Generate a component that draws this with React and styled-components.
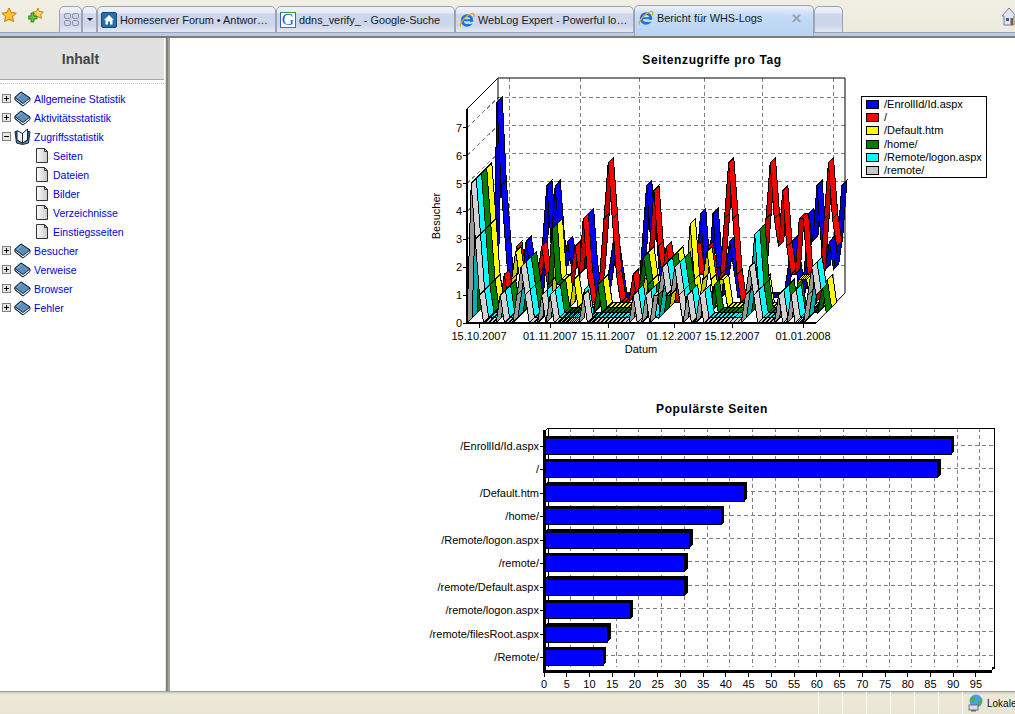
import React from "react";
import styled, { createGlobalStyle } from "styled-components";

const Global = createGlobalStyle`
  html, body { margin: 0; padding: 0; background: #fff; }
  body { font-family: "Liberation Sans", Arial, sans-serif; }
`;

const Page = styled.div`
  width: 1015px; height: 714px; display: flex; flex-direction: column; overflow: hidden; background: #fff;
`;
const TabBar = styled.div`
  height: 38px; flex: none; box-sizing: border-box; display: flex; align-items: flex-start;
  background: linear-gradient(#f1efe4 0, #eceadc 32px);
  border-bottom: 2px solid #7f7d6e; position: relative;
`;
const BlueBand = styled.div`
  position: absolute; left: 0; right: 0; bottom: 0; height: 4px; background: #b7cbec; border-top: 1px solid #9aa0ae; box-sizing: border-box;
`;
const Favs = styled.div`
  width: 59px; height: 32px; flex: none; box-sizing: border-box; display: flex; gap: 11px; padding: 7px 0 0 1px;
`;
const Tabs = styled.div`
  display: flex; align-items: flex-start; height: 36px; position: relative; z-index: 1;
`;
const Tab = styled.div`
  width: ${p => p.$w}px; box-sizing: border-box; height: ${p => (p.$active ? 31 : 27)}px; margin-top: ${p => (p.$active ? 5 : 6)}px;
  flex: none; display: flex; align-items: center; gap: 3px; padding: ${p => (p.$active ? "0 6px 6px 3px" : "0 2px 0 3px")};
  border: 1px solid #9fa3b1; border-bottom: ${p => (p.$active ? "none" : "1px solid #9fa3b1")}; border-radius: 5px 5px 0 0;
  background: ${p => p.$active
    ? "linear-gradient(#eef3fb 0, #c6dcf7 9px, #b9d3f3 100%)"
    : "linear-gradient(#f0f2f9 0, #e6eaf5 6px, #cdd6ea 7px, #cdd6ea 18px, #e2e6f1 24px)"};
  font-size: 10.900px; color: #1a1a1a; white-space: nowrap;
`;
const TabLabel = styled.span`
  flex: 1; min-width: 0; white-space: nowrap;
`;
const TabClose = styled.span`
  color: #97a3b3; font-weight: bold; font-size: 13px; padding-right: 5px;
`;
const Caret = styled.span`
  width: 0; height: 0; margin: 0 auto; border-left: 3px solid transparent; border-right: 3px solid transparent; border-top: 3px solid #222;
`;
const ThumbGrid = styled.div`
  display: grid; grid-template-columns: 7px 7px; grid-auto-rows: 6px; gap: 1px; margin: 0 auto;
`;
const Thumb = styled.i`
  border: 1px solid #8d93a3; border-radius: 2px; box-sizing: border-box;
`;
const FavIconBox = styled.div`
  width: 16px; height: 16px; flex: none; box-sizing: border-box; border: 1px solid;
  border-color: #2aa039 #c03a3a #2a9a40 #2a5fc0; background: #fff; color: #2a5fd0;
  font: 17px/14px "Liberation Serif", serif; text-align: center; overflow: hidden;
`;
const HomeSlot = styled.div`
  position: absolute; right: -2px; top: 7px;
`;
const Icon = styled.svg`
  flex: none; display: block;
`;
const Main = styled.div`
  flex: 1; display: flex; min-height: 0;
`;
const Sidebar = styled.nav`
  width: 165px; flex: none; box-sizing: border-box; background: #fff;
`;
const SideHead = styled.div`
  height: 42px; background: #e1e1e1; border-bottom: 1px solid #a9a9a9; box-sizing: border-box; width: 164px; padding-right: 3px;
  display: flex; align-items: center; justify-content: center;
  font: bold 14px "Liberation Sans", sans-serif; color: #444;
`;
const SideDots = styled.div`
  height: 0; margin-top: 3px; width: 164px; border-top: 1px dotted #bdbdbd;
`;
const Tree = styled.div`
  padding-top: 5px; display: flex; flex-direction: column;
`;
const Row = styled.div`
  height: 19px; display: flex; align-items: center; padding-left: ${p => (p.$child ? 36 : 2)}px; box-sizing: border-box;
`;
const Toggle = styled.span`
  width: 9px; height: 9px; flex: none; box-sizing: border-box; border: 1px solid #808080; background: #e8e8e0; position: relative; margin-right: 3px;
  &::before { content: ""; position: absolute; left: 1px; right: 1px; top: 3px; height: 1px; background: #000; }
  &::after { content: ""; display: ${p => (p.$open ? "none" : "block")}; position: absolute; top: 1px; bottom: 1px; left: 3px; width: 1px; background: #000; }
`;
const RowLink = styled.a`
  font: 10.500px "Liberation Sans", sans-serif; color: #0000e0; margin-left: ${p => (p.$child ? 5 : 3)}px; white-space: nowrap;
`;
const Splitter = styled.div`
  width: 5px; flex: none; box-sizing: border-box; background: #84827a; border-left: 1px solid #e4e2d6; border-right: 2px solid #a6a59c;
`;
const Content = styled.main`
  flex: 1; display: flex; flex-direction: column; overflow: hidden; background: #fff;
`;
const ChartSvg = styled.svg`
  display: block; flex: none; font-family: "Liberation Sans", Arial, sans-serif; font-size: 11px;
`;
const StatusBar = styled.footer`
  height: 23px; flex: none; box-sizing: border-box; background: linear-gradient(#c8c6b8 0, #d8d6c8 1px, #ece9d8 3px, #e8e5d4 100%);
  border-top: 1px solid #a0a094; display: flex; justify-content: flex-end; align-items: center; overflow: hidden;
`;
const StatusCell = styled.div`
  width: 24px; height: 100%; flex: none; box-sizing: border-box; border-left: 1px solid #fff;
`;
const ZoneCell = styled.div`
  width: 53px; flex: none; display: flex; align-items: center; gap: 2px; padding-left: 4px; box-sizing: border-box; height: 100%;
  border-left: 1px solid #fff; font-size: 10px; color: #111; white-space: nowrap;
`;

/* ---------- icons ---------- */
const Star = () => (
  <Icon width="16" height="16" viewBox="0 0 16 16"><path d="M8 1l2.200 4.600 5 .6-3.700 3.400 1 5L8 12.200 3.500 14.600l1-5L.8 6.200l5-.6z" fill="#fdc22c" stroke="#c07a10" /></Icon>
);
const StarPlus = () => (
  <Icon width="16" height="16" viewBox="0 0 16 16"><path d="M10 1l1.600 3.600 3.800.4-2.800 2.600.8 3.800L10 9.600 6.700 11.400l.8-3.800L4.700 5l3.800-.4z" fill="#fdd45a" stroke="#b98a20" /><path d="M3 6h3v3h3v3H6v3H3v-3H0V9h3z" fill="#5cc23c" stroke="#2a7a1a" strokeWidth=".8" /></Icon>
);
const HomeFav = () => (
  <Icon width="16" height="16" viewBox="0 0 16 16"><rect x=".5" y=".5" width="15" height="15" rx="1.500" fill="#2a6ea8" stroke="#144a78" /><path d="M8 3l5 5h-1.500v4.500H9V9.500H7v3H4.500V8H3z" fill="#fff" /></Icon>
);
const IE = () => (
  <Icon width="16" height="16" viewBox="0 0 16 16">
    <circle cx="8" cy="8.500" r="4.800" fill="#bfe0fa" stroke="#1f74d0" strokeWidth="2.800" />
    <path d="M4 8.200h8.500" stroke="#1f74d0" strokeWidth="2" />
    <path d="M10 11.500l4-1" stroke="#dcecfb" strokeWidth="1.400" />
    <path d="M1.500 14.500C0 11 6 4.500 12.500 1.500c2.500-.8 3 1.500 1.500 3.500" fill="none" stroke="#eea520" strokeWidth="1.300" />
  </Icon>
);
const House = () => (
  <Icon width="16" height="20" viewBox="0 0 16 20"><path d="M8 1L1 9h2v9h10V9h2z" fill="#dfe4ee" stroke="#6d7f9c" /><rect x="5" y="11" width="3" height="3" fill="#3a5f96" /><path d="M9.500 11h2.500v7H9.500z" fill="#8a5a2a" /></Icon>
);
const Globe = () => (
  <Icon width="18" height="18" viewBox="0 0 18 18"><circle cx="9" cy="7" r="6.500" fill="#4aa0e8" /><path d="M4 3c3-1 5 1 4 3S4 8 3 6zM11 7l4-1-1 5-3 1z" fill="#4cb04c" /><rect x="2" y="11" width="9" height="5" fill="#d8dde8" stroke="#556" strokeWidth=".8" /><rect x="4" y="16" width="5" height="1.500" fill="#667" /></Icon>
);
const Book = () => (
  <Icon width="17" height="16" viewBox="0 0 17 16">
    <path d="M.8 8.500V6.500L7 1l9 6v2.500L9 15z" fill="#f4f4f4" stroke="#10263c" />
    <path d="M.8 6.500L7 1l9 6-7 5.500z" fill="#5c8fbe" stroke="#10263c" />
    <path d="M3 6.500l4.500-4" stroke="#9cc0e0" />
    <path d="M.8 8.500l8.200 6.500" stroke="#10263c" />
  </Icon>
);
const OpenBook = () => (
  <Icon width="17" height="17" viewBox="0 0 17 17">
    <path d="M1 3.500L2.500 15l6 1.500 6-1.500L16 3.500h-2V12l-5.500 3L3 12V3.500z" fill="#5c8fbe" stroke="#10263c" />
    <path d="M3 2.500l5.500 3V15L3 12zM13.500 1L8.500 5.500V15l5-3z" fill="#f4f4f4" stroke="#10263c" />
  </Icon>
);
const Doc = () => (
  <Icon width="12" height="15" viewBox="0 0 12 15">
    <defs><linearGradient id="dg" x1="0" x2="1"><stop offset="0" stopColor="#fff" /><stop offset="1" stopColor="#c8c8c8" /></linearGradient></defs>
    <path d="M.5.5h8l3 3v11H.500z" fill="url(#dg)" stroke="#333" />
    <path d="M8.500.5v3h3" fill="none" stroke="#333" />
  </Icon>
);

/* ---------- line 3D chart ---------- */
const SER = [
  { name: "/EnrollId/Id.aspx", c: "#0000ff", d: "#0000c4", peaks: [[1,7],[8,2],[13,4],[15,4],[18,2],[21,2],[23,3],[29,2],[37,4],[39,3],[50,3],[53,3],[57,2],[64,1],[72,2],[76,3],[78,4],[81,2],[84,4]] },
  { name: "/", c: "#ff0000", d: "#c80000", peaks: [[1,1],[4,1],[7,2],[13,2],[21,2],[23,3],[29,5],[35,1],[40,4],[43,2],[50,2],[53,2],[58,5],[68,5],[71,4],[75,3],[76,3],[82,5],[84,2]] },
  { name: "/Default.htm", c: "#ffff00", d: "#c4c400", peaks: [[1,5],[3,1],[8,2],[18,3],[20,1],[22,1],[29,1],[40,2],[47,2],[50,3],[54,2],[57,1],[58,1],[68,1],[76,1],[77,1],[78,1],[83,1]] },
  { name: "/home/", c: "#008000", d: "#006000", peaks: [[1,5],[3,1],[8,1],[13,2],[18,3],[20,1],[29,1],[40,2],[43,1],[47,2],[50,2],[57,1],[68,3],[75,1],[77,1],[83,1]] },
  { name: "/Remote/logon.aspx", c: "#00ffff", d: "#00b0b0", peaks: [[1,5],[3,1],[8,1],[13,2],[18,1],[20,1],[27,1],[40,1],[43,1],[47,2],[50,2],[53,1],[56,1],[68,3],[75,1],[78,1],[83,2]] },
  { name: "/remote/", c: "#d2d2d2", d: "#989898", peaks: [[1,5],[2,1],[8,1],[13,2],[18,1],[20,1],[28,1],[40,1],[43,1],[45,1],[47,2],[50,2],[53,1],[56,1],[68,2],[75,1],[78,1],[83,2]] },
];
const X0 = 467, DAYPX = 349 / 84, Y0 = 323, UNIT = 27.9, STEP = 31 / 6;
const seriesValues = peaks => {
  const a = new Array(85).fill(0);
  const put = (i, w) => { if (i >= 0 && i <= 84) a[i] = Math.max(a[i], Math.floor(w)); };
  peaks.forEach(([d, v]) => {
    put(d, v);
    put(d - 1, v * 0.6);
    put(d + 1, v * 0.6);
    put(d + 2, v * 0.3);
    put(d - 2, v * 0.2);
  });
  a[0] = 0;
  return a;
};
const ribbons = SER.flatMap((s, si) => {
  const vals = seriesValues(s.peaks);
  const off = (5 - si) * STEP, off2 = off + STEP;
  return vals.slice(0, 84).map((v, i) => {
    const x0 = X0 + i * DAYPX, x1 = x0 + DAYPX;
    const y0 = Y0 - v * UNIT, y1 = Y0 - vals[i + 1] * UNIT;
    const pts = [[x0 + off, y0 - off], [x1 + off, y1 - off], [x1 + off2, y1 - off2], [x0 + off2, y0 - off2]]
      .map(p => p.map(n => n.toFixed(1)).join(",")).join(" ");
    const fill = y1 < y0 ? s.d : y1 > y0 ? s.c : `url(#hatch${si})`;
    return <polygon key={`${si}-${i}`} points={pts} fill={fill} stroke="#000" strokeWidth="1" shapeRendering="crispEdges" />;
  });
});

const WALL_X = [509, 580, 639, 704, 762, 833];
const YVALS = [1, 2, 3, 4, 5, 6, 7];
const DATES = [["15.10.2007", 479], ["01.11.2007", 550], ["15.11.2007", 608], ["01.12.2007", 674], ["15.12.2007", 732], ["01.01.2008", 803]];
const Grid = "#808080";

const VisitsChart = () => (
  <ChartSvg width="845" height="340" viewBox="170 38 845 340">
    <defs>
      {SER.map((s, i) => (
        <pattern key={i} id={`hatch${i}`} width="4" height="4" patternUnits="userSpaceOnUse">
          <rect width="4" height="4" fill={s.c} />
          <path d="M0 4L4 0" stroke="#000" strokeWidth="1" />
        </pattern>
      ))}
    </defs>
    <text x="712" y="64" textAnchor="middle" fontWeight="bold" fontSize="12" letterSpacing=".62">Seitenzugriffe pro Tag</text>
    <g shapeRendering="crispEdges">
      {YVALS.map(v => (
        <g key={v} stroke={Grid} strokeDasharray="4 3">
          <line x1="498" x2="845" y1={293 - v * 27.9} y2={293 - v * 27.9} />
          <line x1="467" x2="498" y1={323 - v * 27.9} y2={293 - v * 27.9} />
        </g>
      ))}
      {WALL_X.map(x => <line key={x} x1={x} x2={x} y1="78" y2="293" stroke={Grid} strokeDasharray="4 3" />)}
    </g>
    <path d="M467 109L498 78H845V293L816 323M498 78V293" fill="none" stroke="#000" />
    <g>{ribbons}</g>
    <g shapeRendering="crispEdges">
      <line x1="467" x2="467" y1="109" y2="324" stroke="#000" strokeWidth="2" />
      <line x1="466" x2="816" y1="323" y2="323" stroke="#000" strokeWidth="2" />
    </g>
    {[0, ...YVALS].map(v => (
      <g key={v}>
        <line x1="463" x2="467" y1={323 - v * 27.9} y2={323 - v * 27.9} stroke="#000" shapeRendering="crispEdges" />
        <text x="462" y={327 - v * 27.9} textAnchor="end">{v}</text>
      </g>
    ))}
    {DATES.map(([t, x]) => (
      <g key={t}>
        <line x1={x} x2={x} y1="324" y2="328" stroke="#000" shapeRendering="crispEdges" />
        <text x={x} y="340" textAnchor="middle">{t}</text>
      </g>
    ))}
    <text x="641" y="353" textAnchor="middle">Datum</text>
    <text transform="translate(440 216) rotate(-90)" textAnchor="middle">Besucher</text>
    <rect x="861.500" y="96.500" width="125" height="81" fill="#fff" stroke="#000" shapeRendering="crispEdges" />
    {SER.map((s, i) => (
      <g key={s.name}>
        <rect x="866.500" y={100.500 + i * 13.2} width="12" height="8" fill={s.c === "#d2d2d2" ? "#c8c8c8" : s.c} stroke="#000" shapeRendering="crispEdges" />
        <text x="884" y={108 + i * 13.2}>{s.name}</text>
      </g>
    ))}
  </ChartSvg>
);

/* ---------- bar chart ---------- */
const BARS = [["/EnrollId/Id.aspx", 89.6], ["/", 86.6], ["/Default.htm", 44], ["/home/", 39], ["/Remote/logon.aspx", 32], ["/remote/", 31], ["/remote/Default.aspx", 31], ["/remote/logon.aspx", 19], ["/remote/filesRoot.aspx", 14], ["/Remote/", 13]];
const BX = 544, BU = 4.547;
const TICKS = Array.from({ length: 20 }, (_, i) => i * 5);

const PagesChart = () => (
  <ChartSvg width="845" height="313" viewBox="170 378 845 313">
    <text x="712" y="413" textAnchor="middle" fontWeight="bold" fontSize="12" letterSpacing=".62">Populärste Seiten</text>
    <g shapeRendering="crispEdges">
      {TICKS.slice(1).map(t => (
        <line key={t} x1={BX + 4 + t * BU} x2={BX + 4 + t * BU} y1="428" y2="667" stroke={Grid} strokeDasharray="4 3" />
      ))}
      {BARS.map((_, i) => (
        <line key={i} x1="548" x2="994" y1={445 + i * 23.35} y2={445 + i * 23.35} stroke={Grid} strokeDasharray="4 3" />
      ))}
      <path d="M548 428.500H994.500V668" fill="none" stroke="#000" />
      <line x1="548" x2="548" y1="428" y2="667" stroke="#000" />
      <line x1="544" x2="548" y1="432" y2="428" stroke="#000" />
      {BARS.map(([n, v], i) => {
        const top = 438.500 + i * 23.45, right = BX + v * BU;
        return (
          <g key={n}>
            <polygon points={`${BX},${top} ${BX + 3},${top - 3} ${right + 3},${top - 3} ${right + 3},${top + 13} ${right},${top + 16}`} fill="#000" />
            <rect x={BX} y={top} width={v * BU} height="16" fill="#0000ff" stroke="#000" />
            <line x1="540" x2="544" y1={top + 8} y2={top + 8} stroke="#000" />
          </g>
        );
      })}
      <line x1="544.500" x2="544.500" y1="430" y2="672" stroke="#000" strokeWidth="2.500" />
      <line x1="543" x2="992" y1="671" y2="671" stroke="#000" strokeWidth="3" />
      <line x1="992" x2="995" y1="669" y2="667" stroke="#000" strokeWidth="2" />
      {TICKS.map(t => <line key={t} x1={BX + t * BU} x2={BX + t * BU} y1="672" y2="677" stroke="#000" />)}
    </g>
    {BARS.map(([n], i) => (
      <text key={n} x="539" y={450 + i * 23.45} textAnchor="end">{n}</text>
    ))}
    {TICKS.map(t => <text key={t} x={BX + t * BU} y="688" textAnchor="middle">{t}</text>)}
  </ChartSvg>
);

/* ---------- tree data ---------- */
const TREE = [
  { t: "Allgemeine Statistik" },
  { t: "Aktivitätsstatistik" },
  { t: "Zugriffsstatistik", open: true, kids: ["Seiten", "Dateien", "Bilder", "Verzeichnisse", "Einstiegsseiten"] },
  { t: "Besucher" }, { t: "Verweise" }, { t: "Browser" }, { t: "Fehler" },
];

export default function App() {
  return (
    <Page>
      <Global />
      <TabBar>
        <BlueBand />
        <Favs><Star /><StarPlus /></Favs>
        <Tabs>
          <Tab $w={23}><ThumbGrid><Thumb /><Thumb /><Thumb /><Thumb /></ThumbGrid></Tab>
          <Tab $w={15}><Caret /></Tab>
          <Tab $w={179}><HomeFav /><TabLabel>Homeserver Forum • Antwor…</TabLabel></Tab>
          <Tab $w={179}><FavIconBox>G</FavIconBox><TabLabel>ddns_verify_ - Google-Suche</TabLabel></Tab>
          <Tab $w={179}><IE /><TabLabel>WebLog Expert - Powerful lo…</TabLabel></Tab>
          <Tab $w={180} $active><IE /><TabLabel>Bericht für WHS-Logs</TabLabel><TabClose>✕</TabClose></Tab>
          <Tab $w={29} />
        </Tabs>
        <HomeSlot><House /></HomeSlot>
      </TabBar>
      <Main>
        <Sidebar>
          <SideHead>Inhalt</SideHead>
          <SideDots />
          <Tree>
            {TREE.map(n => (
              <React.Fragment key={n.t}>
                <Row>
                  <Toggle $open={n.open} />
                  {n.open ? <OpenBook /> : <Book />}
                  <RowLink>{n.t}</RowLink>
                </Row>
                {n.kids && n.kids.map(k => (
                  <Row key={k} $child><Doc /><RowLink $child>{k}</RowLink></Row>
                ))}
              </React.Fragment>
            ))}
          </Tree>
        </Sidebar>
        <Splitter />
        <Content>
          <VisitsChart />
          <PagesChart />
        </Content>
      </Main>
      <StatusBar>
        {[...Array(6)].map((_, i) => <StatusCell key={i} />)}
        <ZoneCell><Globe />Lokale</ZoneCell>
      </StatusBar>
    </Page>
  );
}
